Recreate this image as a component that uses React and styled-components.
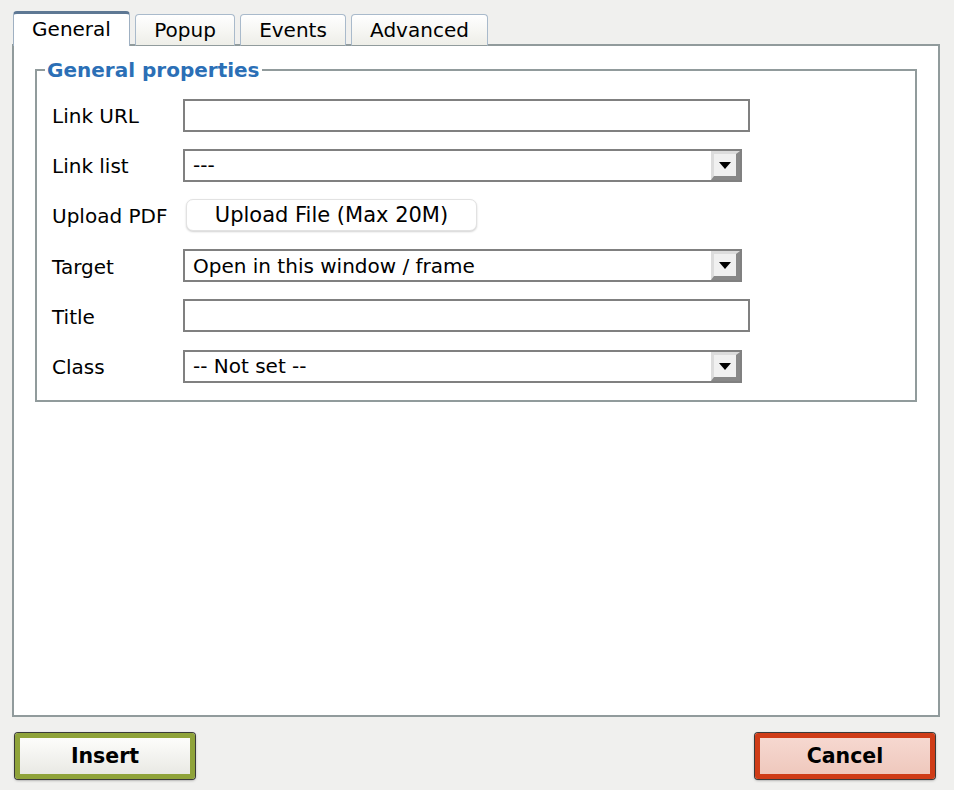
import React from "react";
import styled, { createGlobalStyle, css } from "styled-components";

const Global = createGlobalStyle`
  html, body { margin: 0; padding: 0; background: #f0f0ee; }
  body { font-family: "DejaVu Sans", Verdana, sans-serif; font-size: 20px; color: #000; }
  * { box-sizing: border-box; }
`;

const Page = styled.div`
  width: 954px;
  height: 790px;
  padding: 11px 14px 0 12px;
  display: flex;
  flex-direction: column;
`;

const TabBar = styled.div`
  display: flex;
  align-items: flex-end;
  gap: 5px;
  padding-left: 1px;
  height: 35px;
  position: relative;
  z-index: 1;
  margin-bottom: -2px;
`;

const Tab = styled.div`
  height: ${(p) => (p.$active ? "35px" : "32px")};
  width: ${(p) => p.$w}px;
  display: flex;
  align-items: center;
  justify-content: center;
  font-size: 20px;
  border-radius: 4px 4px 0 0;
  ${(p) =>
    p.$active
      ? css`
          background: #fff;
          border: 1px solid #9fb0c2;
          border-top: 3px solid #5e7894;
          border-bottom: none;
          padding-bottom: 2px;
        `
      : css`
          background: linear-gradient(#ffffff, #eeeee8);
          border: 1px solid #a9bacb;
          border-bottom: 1px solid #919b9c;
          padding-bottom: 1px;
        `}
`;

const Panel = styled.div`
  height: 673px;
  background: #fff;
  border: 2px solid #919b9c;
  padding: 12px 21px 0 21px;
`;

const Fieldset = styled.fieldset`
  margin: 0;
  border: 2px solid #919b9c;
  padding: 8px 15px 9px 15px;
`;

const Legend = styled.legend`
  color: #2b6fb6;
  font-weight: bold;
  font-size: 20px;
  padding: 0 2px;
  margin-left: -7px;
`;

const Form = styled.div`
  display: grid;
  grid-template-columns: 131px 1fr;
  grid-auto-rows: 50.2px;
  align-items: center;
`;

const Label = styled.label`
  font-size: 20px;
  padding-top: 2px;
`;

const TextInput = styled.div`
  width: 567px;
  height: 33px;
  border: 2px solid #808080;
  background: #fff;
`;

const Select = styled.div`
  width: 559px;
  height: 33px;
  border: 2px solid #808080;
  background: #fff;
  display: flex;
  align-items: center;
`;

const SelectText = styled.span`
  flex: 1;
  padding-left: 8px;
  font-size: 20px;
  white-space: nowrap;
`;

const SelectButton = styled.span`
  width: 29px;
  height: 29px;
  background: #f0f0f0;
  border-style: solid;
  border-width: 3px 4px 4px 3px;
  border-color: #dcdcdc #888 #888 #dcdcdc;
  display: flex;
  align-items: center;
  justify-content: center;
`;

const Arrow = styled.span`
  width: 0;
  height: 0;
  border-left: 6px solid transparent;
  border-right: 6px solid transparent;
  border-top: 7px solid #000;
  margin-top: 1px;
`;

const UploadButton = styled.button`
  margin-left: 3px;
  width: 291px;
  height: 32px;
  border: 1px solid #e2e2e2;
  border-radius: 7px;
  background: #fff;
  box-shadow: 0 1px 2px rgba(0, 0, 0, 0.18);
  font-family: "DejaVu Sans", Verdana, sans-serif;
  font-size: 21px;
  color: #000;
  padding: 0;
`;

const Footer = styled.div`
  display: flex;
  justify-content: space-between;
  padding: 16px 5px 0 3px;
`;

const ActionButton = styled.button`
  width: 180px;
  height: 46px;
  border-radius: 3px;
  border: 5px solid ${(p) => p.$edge};
  box-shadow: 0 0 0 1px #3a3a3a, 0 1px 3px rgba(0, 0, 0, 0.5);
  background: ${(p) => p.$fill};
  font-family: "DejaVu Sans", Verdana, sans-serif;
  font-weight: bold;
  font-size: 20.5px;
  color: #000;
  padding: 0;
`;

const Select2 = ({ value }) => (
  <Select>
    <SelectText>{value}</SelectText>
    <SelectButton>
      <Arrow />
    </SelectButton>
  </Select>
);

export default function App() {
  return (
    <>
      <Global />
      <Page>
        <TabBar>
          <Tab $active $w={117}>General</Tab>
          <Tab $w={100}>Popup</Tab>
          <Tab $w={106}>Events</Tab>
          <Tab $w={137}>Advanced</Tab>
        </TabBar>
        <Panel>
          <Fieldset>
            <Legend>General properties</Legend>
            <Form>
              <Label>Link URL</Label>
              <TextInput />
              <Label>Link list</Label>
              <Select2 value="---" />
              <Label>Upload PDF</Label>
              <div>
                <UploadButton>Upload File (Max 20M)</UploadButton>
              </div>
              <Label>Target</Label>
              <Select2 value="Open in this window / frame" />
              <Label>Title</Label>
              <TextInput />
              <Label>Class</Label>
              <Select2 value="-- Not set --" />
            </Form>
          </Fieldset>
        </Panel>
        <Footer>
          <ActionButton $edge="#8fa33a" $fill="linear-gradient(#fdfdfb, #e9e9e4)">Insert</ActionButton>
          <ActionButton $edge="#cf3c17" $fill="linear-gradient(#f6d8d0, #efc8bd)">Cancel</ActionButton>
        </Footer>
      </Page>
    </>
  );
}
